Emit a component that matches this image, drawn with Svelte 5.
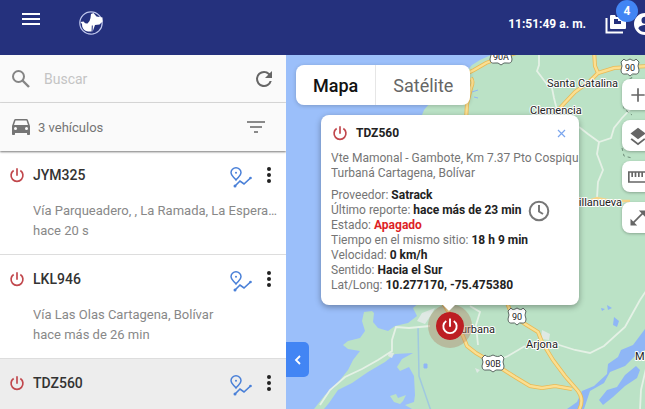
<script>
  const vehicles = [
    { plate: 'JYM325', place: 'Vía Parqueadero, , La Ramada, La Esperanza', ago: 'hace 20 s' },
    { plate: 'LKL946', place: 'Vía Las Olas Cartagena, Bolívar', ago: 'hace más de 26 min' },
    { plate: 'TDZ560', selected: true }
  ];
  const details = [
    ['Proveedor:', 'Satrack'],
    ['Último reporte:', 'hace más de 23 min'],
    ['Estado:', 'Apagado'],
    ['Tiempo en el mismo sitio:', '18 h 9 min'],
    ['Velocidad:', '0 km/h'],
    ['Sentido:', 'Hacia el Sur'],
    ['Lat/Long:', '10.277170, -75.475380']
  ];
  const highways = [
    'M466 74L474 70L486 63L502 57L520 52',
    'M471 78Q474 82 471 88L467 104L466 120',
    'M594 50L595 66L598 73L590 81L575 92L558 110',
    'M598 73L614 68L630 67L650 66',
    'M440 298L452 318L463 336L467 346L476 353L493 363L515 377L530 386L542 388L555 386L572 389',
    'M505 298L512 315L525 324L538 332L542 342L553 360L565 376L578 391Q585 400 578 412'
  ];
  const roads = [
    'M539 50L539 65L537 71L546 83L552 88L554 98L557 110',
    'M579 127L588 134L599 142L611 138L614 128L622 118L645 94',
    'M599 142L597 154L603 170L598 182L597 198',
    'M576 206L597 199L610 203L628 201',
    'M320 405L330 390L345 377L362 369L378 360L392 351L392 340L396 327L409 328L430 326',
    'M492 363L508 356L525 346',
    'M556 344L575 350L590 353L604 346L625 327L640 300L650 285',
    'M640 410L641 390L648 360',
    'M470 306L480 312L476 325L478 345'
  ];
</script>

{#snippet power()}
  <svg class="power" viewBox="0 0 24 24" aria-hidden="true"><path d="M12 2v11M7 5.3a8.9 8.9 0 1 0 10 0" /></svg>
{/snippet}

{#snippet shield(x, y, label, w)}
  <g transform="translate({x} {y})">
    <path d="M{-w + 3} -8Q{-w / 2} -5 0 -8Q{w / 2} -5 {w - 3} -8L{w} -5Q{w - 2} -1 {w} 3Q{w} 8 {w - 5} 7Q3 6 0 9Q-3 6 {5 - w} 7Q{-w} 8 {-w} 3Q{2 - w} -1 {-w} -5Z" fill="#fff" stroke="#5d6964" />
    <text class="num" y="4">{label}</text>
  </g>
{/snippet}

<div class="app">
  <header>
    <button class="icon menu" aria-label="Menú">
      <svg width="20" height="14" viewBox="0 0 20 14"><path d="M1 2h18M1 7h18M1 12h18" stroke="#fff" stroke-width="2" /></svg>
    </button>
    <svg class="logo" viewBox="0 0 24 24" role="img" aria-label="Satrack">
      <circle cx="12" cy="12" r="11.2" fill="none" stroke="#bfc6ec" stroke-width="1.2" />
      <path d="M12 3L14.500 2L17.500 5.600L23.500 6.500L23.600 10.500L20.500 13.600L16 14L13.700 20.500L9 20.500Q4.500 20 3.200 15.600L3 13L1.500 11L4.500 10.400Q6.500 13 8.500 12.500Q11 10.500 11.500 7Z" fill="#fff" />
      <path d="M13.300 14.500L13 22.500" stroke="#25317d" stroke-width="1" />
    </svg>
    <div class="right">
      <time>11:51:49 a. m.</time>
      <button class="icon alerts" aria-label="Notificaciones">
        <svg width="22" height="20" viewBox="0 0 22 20">
          <path d="M1.500 4v14.500H18" fill="none" stroke="#fff" stroke-width="2" />
          <path fill-rule="evenodd" d="M6 1h4l1 2h10v11a1 1 0 0 1-1 1H6a1 1 0 0 1-1-1V2a1 1 0 0 1 1-1zM9 5v5h7V7h-3V5z" fill="#fff" />
        </svg>
        <span class="badge">4</span>
      </button>
      <button class="icon" aria-label="Cuenta">
        <svg width="22" height="22" viewBox="2 2 20 20"><path fill="#fff" d="M12 2a10 10 0 1 0 0 20 10 10 0 0 0 0-20zm0 3.300a3.200 3.200 0 1 1 0 6.400 3.200 3.200 0 0 1 0-6.400zm0 13.900a7 7 0 0 1-6-3.200c0-2 4-3.100 6-3.100s6 1.100 6 3.100a7 7 0 0 1-6 3.200z" /></svg>
      </button>
    </div>
  </header>

  <main>
    <aside>
      <div class="search">
        <svg width="20" height="20" viewBox="0 0 20 20"><circle cx="7.500" cy="7.500" r="5.500" fill="none" stroke="#858585" stroke-width="2" /><path d="M11.500 11.500L18 18" stroke="#858585" stroke-width="2.400" /></svg>
        <input type="text" placeholder="Buscar" aria-label="Buscar" />
        <button class="icon" aria-label="Actualizar">
          <svg width="24" height="24" viewBox="0 0 24 24"><path fill="#666" d="M17.650 6.350A7.960 7.960 0 0 0 12 4a8 8 0 1 0 7.730 10h-2.080A6 6 0 1 1 12 6c1.660 0 3.140.690 4.220 1.780L13 11h7V4z" /></svg>
        </button>
      </div>
      <div class="count">
        <svg width="24" height="24" viewBox="0 0 24 24"><path fill="#757575" d="M18.920 5.010A1.500 1.500 0 0 0 17.500 4h-11c-.660 0-1.210.420-1.420 1.010L3 11v8c0 .550.450 1 1 1h1c.550 0 1-.450 1-1v-1h12v1c0 .550.450 1 1 1h1c.550 0 1-.450 1-1v-8zM6.500 15a1.500 1.500 0 1 1 0-3 1.500 1.500 0 0 1 0 3zm11 0a1.500 1.500 0 1 1 0-3 1.500 1.500 0 0 1 0 3zM5 10l1.500-4.500h11L19 10z" /></svg>
        <span>3 vehículos</span>
        <button class="icon" aria-label="Filtrar">
          <svg width="20" height="14" viewBox="0 0 20 14"><path d="M1 2h18M4 7h12M8 12h4" stroke="#666" stroke-width="1.600" /></svg>
        </button>
      </div>
      <ul>
        {#each vehicles as v}
          <li class:selected={v.selected}>
            <div class="top">
              {@render power()}
              <strong>{v.plate}</strong>
              <button class="icon route" aria-label="Recorrido de {v.plate}">
                <svg width="22" height="22" viewBox="0 0 22 22" fill="none" stroke="#4a80d8" stroke-width="1.500">
                  <path d="M6 13C3 9.500 1 8.500 1 5.800a5 5 0 0 1 10 0C11 8.500 9 9.500 6 13z" />
                  <circle cx="6" cy="5.800" r="1" fill="#4a80d8" stroke="none" />
                  <path d="M5 19l5-5 4 3 6.500-6" stroke-width="1.700" />
                  <circle cx="5" cy="19" r="1.500" fill="#4a80d8" stroke="none" /><circle cx="20.500" cy="11" r="1.300" fill="#4a80d8" stroke="none" />
                </svg>
              </button>
              <button class="icon" aria-label="Opciones de {v.plate}">
                <svg width="6" height="18" viewBox="0 0 6 18" fill="#222"><circle cx="3" cy="3" r="2" /><circle cx="3" cy="9" r="2" /><circle cx="3" cy="15" r="2" /></svg>
              </button>
            </div>
            {#if v.place}
              <p>{v.place}</p>
              <p>{v.ago}</p>
            {/if}
          </li>
        {/each}
      </ul>
    </aside>

    <section class="map" aria-label="Mapa de vehículos">
      <svg class="canvas" viewBox="286 55 359 354" preserveAspectRatio="xMinYMin slice">
        <rect x="286" y="55" width="359" height="354" fill="#9bbffa" />
        <path fill="#bbe2c6" d="M491 55L480 60L472 65L450 90L430 103L424 110L420 120V302L413 308L417 316L408 323L395 326L388 331L378 328L373 322L374 313L372 311L364 312L362 321L365 331L360 338L348 341L343 345L348 349L360 351L353 360L348 370L340 380L335 387L325 395L314 409H324L329 403L338 390L352 383L368 372L385 362L395 354L413 353L402 359L397 367L400 371L409 367L414 376L415 395L414 402L405 405L412 409H645V55Z" />
        <path fill="#bbe2c6" d="M390 396L396 394L398 398L406 395L403 401L400 404L394 402Z" />
        <g fill="#8fb6f6">
          <path d="M567 409L577 402L582 391L594 386L607 374L608 364L618 357L621 350L633 345L645 329V350L634 357L625 366L610 372L604 383L590 391L584 409Z" />
          <path d="M599 400L607 390L617 387L625 375L636 366L640 370L637 378L625 386L613 397L603 405Z" />
          <path d="M614 317l5 4-2 6-4-2zM607 305l5 3-4 2zM601 308l4 1-3 2z" />
        </g>
        <path d="M418 327L419 376L431 411" fill="none" stroke="#a0c9df" stroke-width="1.500" />
        <path d="M424 364h3v4h-3zM472 92l6-2M474 97l4 1" fill="#8fb6f6" stroke="#8fb6f6" />
        <path d="M435 308L422 313L417 321L425 324L431 315ZM389 352l5 1-2 5-4-2zM542 330L550 334L549 340L541 339ZM475 368l5 2-3 3z" fill="#dfe9e4" />
        <g fill="none" stroke="#e5f1e6" stroke-width="1.800">{#each roads as d}<path {d} />{/each}</g>
        <path d="M574 206L597 198L612 201L630 201" fill="none" stroke="#f6d489" stroke-width="2.500" />
        <g fill="none" stroke="#e9b955" stroke-width="4">{#each highways as d}<path {d} />{/each}</g>
        <g fill="none" stroke="#fbdf91" stroke-width="2.400">{#each highways as d}<path {d} />{/each}</g>
        <path d="M632 77Q623 92 624 109L632 115M622 148l2 8 8 2M629 80l4-5" fill="none" stroke="#708e7b" stroke-dasharray="3 3" />
        {@render shield(501, 56, '90A', 11)}
        {@render shield(630, 67, '90', 9)}
        {@render shield(517, 316, '90', 9)}
        {@render shield(493, 363, '90B', 11)}
        <g class="places">
          <text x="547" y="87">Santa Catalina</text>
          <text x="530" y="114">Clemencia</text>
          <text x="622" y="206" text-anchor="end">Villanueva</text>
          <text x="495" y="333" text-anchor="end">Turbana</text>
          <text x="526" y="348">Arjona</text>
          <text x="635" y="360">M</text>
        </g>
      </svg>

      <div class="types">
        <button class="active">Mapa</button>
        <button>Satélite</button>
      </div>

      <div class="tools">
        <button aria-label="Acercar"><svg viewBox="0 0 24 24"><path d="M12 4v16M4 12h16" stroke="#666" stroke-width="2" /></svg></button>
        <button aria-label="Capas"><svg viewBox="0 0 24 24" fill="#666"><path d="M12 2l9 7-9 7-9-7z" /><path d="M4.600 12.800L3 14.100l9 7 9-7-1.600-1.300-7.400 5.700z" transform="translate(0 2)" /></svg></button>
        <button aria-label="Medir"><svg viewBox="0 0 24 24" fill="none" stroke="#666" stroke-width="2"><path d="M1 6h22v12H1zM5 6v6M9 6v6M13 6v6M17 6v6" /></svg></button>
        <button aria-label="Pantalla completa"><svg viewBox="0 0 24 24"><path d="M5 19L19 5" stroke="#666" stroke-width="2" /><path d="M13 3h8v8zM3 13v8h8z" fill="#666" /></svg></button>
      </div>

      <button class="collapse" aria-label="Ocultar panel"><svg width="8" height="10" viewBox="0 0 8 10"><path d="M6 1L2 5l4 4" fill="none" stroke="#fff" stroke-width="1.800" /></svg></button>

      <div class="marker">{@render power()}</div>

      <article class="popup">
        <div class="head">
          {@render power()}
          <strong>TDZ560</strong>
          <button class="icon" aria-label="Cerrar"><svg width="9" height="9" viewBox="0 0 9 9"><path d="M1 1l7 7M8 1L1 8" stroke="#7ba6ee" stroke-width="1.200" /></svg></button>
        </div>
        <p class="address">Vte Mamonal - Gambote, Km 7.37 Pto Cospiqu<br />Turbaná Cartagena, Bolívar</p>
        <dl>
          {#each details as [name, value], i}
            <div>
              <dt>{name}</dt>
              <dd class:off={value === 'Apagado'}>{value}</dd>
              {#if i === 1}
                <svg class="clock" viewBox="0 0 22 22" fill="none" stroke="#777" stroke-width="2"><circle cx="11" cy="11" r="9.300" /><path d="M11 5v6.500l4 2.500" /></svg>
              {/if}
            </div>
          {/each}
        </dl>
      </article>
    </section>
  </main>
</div>

<style>
  :global(body) { margin: 0; }
  .app { height: 100vh; display: flex; flex-direction: column; overflow: hidden; font-family: Roboto, "Liberation Sans", sans-serif; color: #212121; }
  button { font: inherit; border: 0; padding: 0; cursor: pointer; }
  svg { display: block; flex: none; }
  p, ul, dl, dd { margin: 0; padding: 0; }
  .icon { display: flex; background: none; }
  .power { width: 16px; height: 16px; fill: none; stroke: #c1474c; stroke-width: 2.5; }

  header { flex: none; height: 55px; box-sizing: border-box; padding: 11px 0 0 21px; display: flex; align-items: flex-start; background: #25317d; overflow: hidden; }
  .menu { padding-top: 1px; }
  .logo { width: 24px; height: 24px; margin-left: 38px; }
  .right { margin: 0 -11px 0 auto; display: flex; align-items: center; color: #fff; }
  time { font-size: 12px; font-weight: 700; line-height: 26px; margin-right: 19px; }
  .alerts { position: relative; margin-right: 7px; }
  .badge { position: absolute; left: 11px; top: -14px; width: 22px; height: 22px; border-radius: 50%; background: #4285f4; color: #fff; font-size: 12px; font-weight: 700; line-height: 22px; text-align: center; }

  main { flex: 1; min-height: 0; display: flex; }
  aside { flex: none; width: 286px; background: #fff; overflow: hidden; }
  .search, .count { box-sizing: border-box; height: 48px; display: flex; align-items: center; background: #fafafa; padding: 0 10px; }
  .search { border-bottom: 1px solid #ddd; gap: 13px; padding-left: 11px; }
  .search input { flex: 1; min-width: 0; border: 0; padding: 0; outline: 0; background: none; font: 14px Roboto, sans-serif; }
  .search input::placeholder { color: #c4c4c4; }
  .count { position: relative; padding: 0 20px 0 9px; gap: 5px; font-size: 13px; color: #757575; box-shadow: 0 1px 2px #0008; }
  .count button { margin-left: auto; }
  ul { list-style: none; }
  li { box-sizing: border-box; height: 104px; padding: 13px 8px 0 9px; border-bottom: 1px solid #ddd; }
  .selected { background: #ededed; }
  .top { display: flex; align-items: center; height: 22px; margin-bottom: 15px; padding-right: 6px; }
  .top strong { margin-left: 8px; font-size: 14px; font-weight: 500; color: #333; }
  .route { margin: 5px 14px 0 auto; }
  li p { margin-left: 24px; font-size: 13px; line-height: 20px; color: #888; white-space: nowrap; overflow: hidden; text-overflow: ellipsis; }

  .map { position: relative; flex: 1; min-width: 0; overflow: hidden; }
  .canvas { position: absolute; width: 100%; height: 100%; }
  .canvas text { fill: #222; font-size: 11px; }
  .canvas .num { font-size: 9px; text-anchor: middle; }
  .places text { stroke: #fff; stroke-width: 2px; paint-order: stroke; stroke-linejoin: round; }
  .types { position: absolute; left: 10px; top: 10px; height: 40px; display: flex; border-radius: 8px; overflow: hidden; box-shadow: 0 1px 4px #0003; }
  .types button { padding: 0 17px; background: #fff; color: #666; font-size: 18px; }
  .types .active { color: #111; font-weight: 500; border-right: 1px solid #e6e6e6; }
  .tools { position: absolute; right: -9px; top: 24px; display: flex; flex-direction: column; gap: 10px; }
  .tools button { width: 32px; height: 31px; display: flex; align-items: center; justify-content: center; background: #fff; border-radius: 8px; box-shadow: 0 1px 3px #0004; }
  .tools svg { width: 20px; height: 20px; }
  .collapse { position: absolute; left: 0; top: 287px; width: 23px; height: 35px; display: flex; align-items: center; justify-content: center; background: #4285f4; border-radius: 0 5px 5px 0; }
  .marker { position: absolute; left: 142px; top: 249px; width: 28px; height: 28px; display: flex; align-items: center; justify-content: center; border-radius: 50%; background: #bd1e23; border: 8px solid #b1836266; background-clip: padding-box; }
  .marker .power { width: 18px; height: 18px; stroke: #fff; }
  .popup { position: absolute; left: 35px; top: 60px; width: 258px; box-sizing: border-box; padding: 9px 0 12px 10px; background: #fff; border-radius: 8px; box-shadow: 0 2px 6px #0005; font-size: 12px; line-height: 15px; color: #757575; }
  .popup::after { content: ""; position: absolute; left: 122px; bottom: -6px; border: 6px solid transparent; border-top-color: #fff; border-bottom: 0; }
  .head { display: flex; align-items: center; height: 18px; padding: 0 13px 0 1px; }
  .head strong { margin-left: 8px; color: #222; font-weight: 700; }
  .head button { margin-left: auto; }
  .address { margin: 9px 0 7px; white-space: nowrap; overflow: hidden; }
  dl { display: flex; flex-direction: column; }
  dl div { display: flex; gap: 3px; height: 15px; align-items: center; }
  dd { color: #222; font-weight: 700; }
  .off { color: #dd1f26; }
  .clock { width: 22px; height: 22px; margin-left: 4px; }
</style>
